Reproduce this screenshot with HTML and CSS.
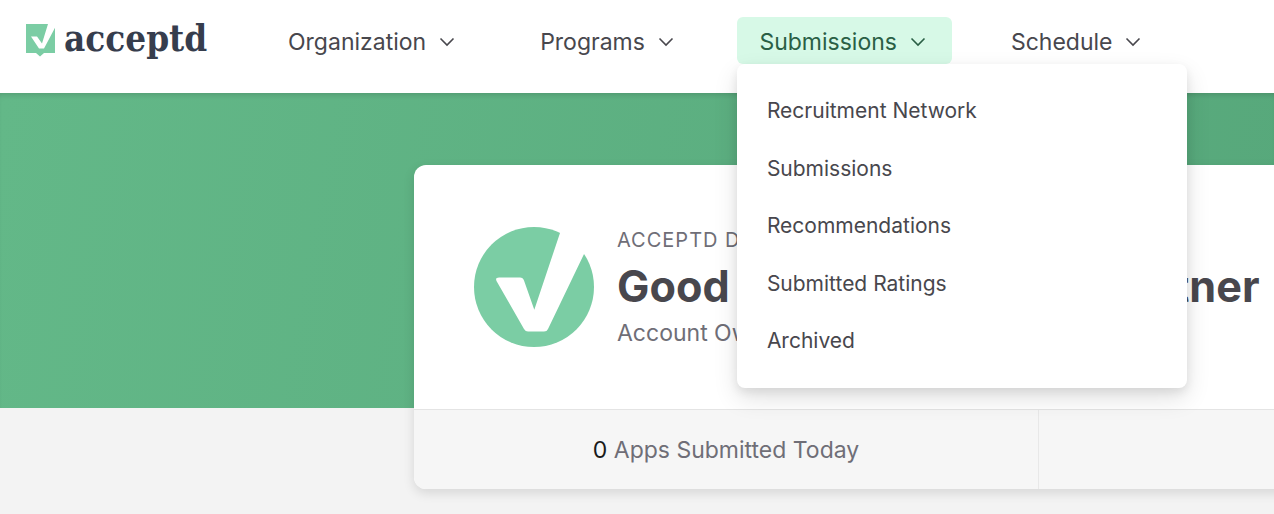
FILE: index.html
```html
<!DOCTYPE html>
<html lang="en">
<head>
<meta charset="utf-8">
<title>Acceptd</title>
<link rel="stylesheet" href="styles.css">
</head>
<body>
<header class="topbar">
  <a class="logo">
    <svg class="logo-mark" viewBox="0 0 29 33" aria-hidden="true"><path fill="#7bcda4" d="M0 0H29V29H18L14 32.500L10 29H0Z"/><path fill="#fff" d="M5 12.500H11L16 19.500L22 0H31L18 24.500H13Z"/></svg>
    <span class="logo-text">acceptd</span>
  </a>
  <nav class="nav">
    <div class="nav-item nav-org"><span>Organization</span><svg class="chev" viewBox="0 0 16 10"><path d="M1.5 1.5L8 8L14.5 1.5"/></svg></div>
    <div class="nav-item nav-prog"><span>Programs</span><svg class="chev" viewBox="0 0 16 10"><path d="M1.5 1.5L8 8L14.5 1.5"/></svg></div>
    <div class="nav-wrap">
      <div class="nav-item active"><span>Submissions</span><svg class="chev" viewBox="0 0 16 10"><path d="M1.5 1.5L8 8L14.5 1.5"/></svg></div>
      <ul class="menu">
        <li>Recruitment Network</li>
        <li>Submissions</li>
        <li>Recommendations</li>
        <li>Submitted Ratings</li>
        <li>Archived</li>
      </ul>
    </div>
    <div class="nav-item nav-sched"><span>Schedule</span><svg class="chev" viewBox="0 0 16 10"><path d="M1.5 1.5L8 8L14.5 1.5"/></svg></div>
  </nav>
</header>
<div class="banner"></div>
<main class="card">
  <section class="profile">
    <svg class="avatar" viewBox="0 0 120 120" aria-hidden="true">
      <circle cx="60" cy="60" r="60" fill="#7bcda4"/>
      <path fill="#fff" d="M22.500 54Q21 50.500 25 50.500H46Q49 50.500 50 53.500L60.300 82.700L88 0H123L74 102Q73 104.500 70 104.500H54Q51.500 104.500 50 102Z"/>
    </svg>
    <div class="profile-text">
      <div class="org">ACCEPTD DEMO</div>
      <h1>Good afternoon, Demo Partner</h1>
      <div class="role">Account Owner</div>
    </div>
  </section>
  <section class="stats">
    <div class="stat"><b>0</b> Apps Submitted Today</div>
    <div class="stat"></div>
  </section>
</main>
</body>
</html>
```
FILE: styles.css
```css
* { box-sizing: border-box; }
html, body { height: 100%; }
body {
  margin: 0;
  background: #f3f3f3;
  font-family: Inter, "Liberation Sans", sans-serif;
  overflow: hidden;
  color: #48474d;
}
.topbar {
  position: relative;
  z-index: 2;
  height: 93px;
  background: #fff;
  display: flex;
  align-items: flex-start;
  padding-left: 26px;
}
.logo { display: flex; align-items: flex-start; width: 246px; padding-top: 22px; }
.logo-mark { width: 29px; height: 33px; margin-top: 2px; flex: none; }
.logo-text {
  font-family: "DejaVu Serif Condensed", "DejaVu Serif", serif;
  font-weight: 700;
  font-size: 36.500px;
  line-height: 34px;
  color: #363d4d;
  margin-left: 9px;
}
.nav { display: flex; align-items: flex-start; padding-top: 17px; }
.nav-item {
  display: flex;
  align-items: center;
  gap: 13px;
  height: 47px;
  padding: 2px 26px 0 22.500px;
  border-radius: 6px;
  font-size: 23px;
  color: #48474d;
  white-space: nowrap;
}
.nav-org { padding: 2px 16px 0; margin-right: 53px; }
.nav-prog { padding: 2px 0 0 16px; margin-right: 63px; }
.nav-sched { padding: 2px 0 0 16px; margin-left: 43px; }
.nav-wrap { position: relative; }
.chev { width: 16px; height: 10px; fill: none; stroke: currentColor; stroke-width: 1.6; }
.active { background: #d7f9e7; color: #2a5f45; }
.menu {
  position: absolute;
  left: 0;
  top: 47px;
  width: 450px;
  height: 324px;
  margin: 0;
  padding: 18px 30px;
  list-style: none;
  background: #fff;
  border-radius: 8px;
  box-shadow: 0 10px 25px rgba(0,0,0,.12), 0 4px 10px rgba(0,0,0,.08);
}
.menu li { height: 57.5px; line-height: 57.5px; font-size: 21px; white-space: nowrap; color: #48474d; }
.banner {
  height: 315px;
  background: linear-gradient(100deg, #63b888 0%, #57a87b 100%);
  box-shadow: inset 0 5px 6px -4px rgba(0,0,0,.18);
}
.card {
  position: relative;
  margin: -243px 0 0 414px;
  width: 1200px;
  height: 324px;
  background: #fff;
  border-radius: 12px;
  box-shadow: 0 4px 12px rgba(0,0,0,.12);
  overflow: hidden;
}
.profile { display: flex; align-items: center; height: 245px; padding-left: 60px; border-bottom: 1px solid #e4e4e4; }
.avatar { width: 120px; height: 120px; flex: none; margin-top: -1px; }
.profile-text { margin-left: 23px; }
.org { font-size: 20px; letter-spacing: 1px; line-height: 24px; color: #6f6e77; white-space: nowrap; }
h1 { margin: 9px 0 8px; font-size: 43.200px; line-height: 50px; font-weight: 700; color: #48474d; white-space: nowrap; }
.role { font-size: 23px; line-height: 28px; color: #6f6e77; white-space: nowrap; }
.stats { display: flex; height: 79px; background: #f6f6f6; }
.stat {
  flex: none;
  width: 625px;
  display: flex;
  align-items: center;
  justify-content: center;
  gap: 6.500px;
  font-size: 23px;
  color: #6f6e77;
  border-right: 1px solid #e8e8e8;
}
.stat b { font-weight: 400; color: #1a1a1a; }
```
